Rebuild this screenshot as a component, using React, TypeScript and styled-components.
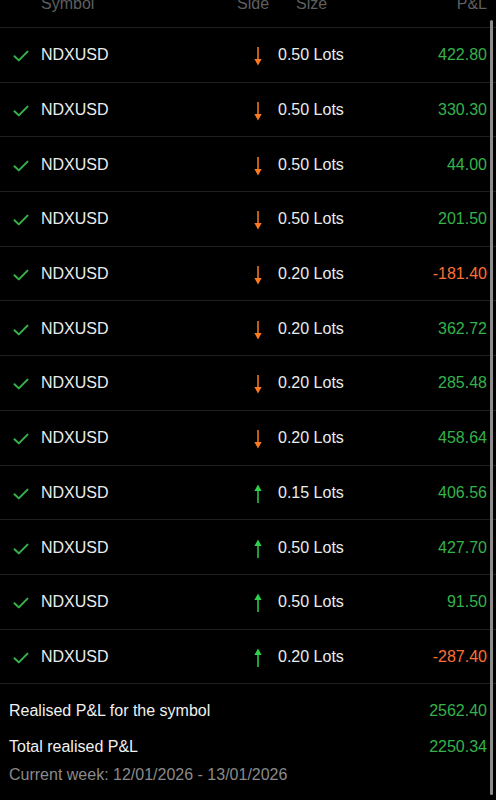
import React from 'react';
import styled, { createGlobalStyle } from 'styled-components';

type Trade = { side: 'buy' | 'sell'; lots: string; pnl: number };

const trades: Trade[] = [
  { side: 'sell', lots: '0.50', pnl: 422.8 },
  { side: 'sell', lots: '0.50', pnl: 330.3 },
  { side: 'sell', lots: '0.50', pnl: 44.0 },
  { side: 'sell', lots: '0.50', pnl: 201.5 },
  { side: 'sell', lots: '0.20', pnl: -181.4 },
  { side: 'sell', lots: '0.20', pnl: 362.72 },
  { side: 'sell', lots: '0.20', pnl: 285.48 },
  { side: 'sell', lots: '0.20', pnl: 458.64 },
  { side: 'buy', lots: '0.15', pnl: 406.56 },
  { side: 'buy', lots: '0.50', pnl: 427.7 },
  { side: 'buy', lots: '0.50', pnl: 91.5 },
  { side: 'buy', lots: '0.20', pnl: -287.4 },
];

const GREEN = '#35b24a';
const ORANGE = '#ff6f35';

const CheckIcon = () => (
  <svg width="16" height="12" viewBox="0 0 16 12">
    <path d="M1.5 6.2 L5.8 10.4 L14.5 1.6" fill="none" stroke={GREEN} strokeWidth="2" strokeLinecap="round" strokeLinejoin="round" />
  </svg>
);

const SideArrow: React.FC<{ side: 'buy' | 'sell' }> = ({ side }) => {
  const color = side === 'buy' ? '#2fd14a' : '#ff7a1f';
  return (
    <svg width="10" height="20" viewBox="0 0 10 20" style={{ transform: side === 'buy' ? 'rotate(180deg)' : undefined }}>
      <line x1="5" y1="1" x2="5" y2="14" stroke={color} strokeWidth="1.5" />
      <path d="M1.4 13 L8.6 13 L5 19.5 Z" fill={color} />
    </svg>
  );
};

const App: React.FC = () => {
  return (
    <>
      <GlobalStyle />
      <Screen>
        <Header>
          <HeadCell>Symbol</HeadCell>
          <HeadCell>Side</HeadCell>
          <HeadCell>Size</HeadCell>
          <HeadCell $right>P&amp;L</HeadCell>
        </Header>
        {trades.map((t, i) => (
          <Row key={i}>
            <CheckCell>
              <CheckIcon />
            </CheckCell>
            <Symbol>NDXUSD</Symbol>
            <ArrowCell>
              <SideArrow side={t.side} />
            </ArrowCell>
            <Size>{t.lots} Lots</Size>
            <Pnl $negative={t.pnl < 0}>{t.pnl.toFixed(2)}</Pnl>
          </Row>
        ))}
        <Summary>
          <SummaryLine>
            <SummaryLabel>Realised P&amp;L for the symbol</SummaryLabel>
            <SummaryValue>2562.40</SummaryValue>
          </SummaryLine>
          <SummaryLine>
            <SummaryLabel>Total realised P&amp;L</SummaryLabel>
            <SummaryValue>2250.34</SummaryValue>
          </SummaryLine>
          <WeekNote>Current week: 12/01/2026 - 13/01/2026</WeekNote>
        </Summary>
        <ScrollBar />
      </Screen>
    </>
  );
};

const GlobalStyle = createGlobalStyle`
  html, body {
    margin: 0;
    padding: 0;
    background: #000;
  }
  body {
    font-family: "Liberation Sans", Arial, sans-serif;
    color: #ececec;
    overflow: hidden;
  }
`;

const Screen = styled.div`
  position: relative;
  width: 496px;
  height: 800px;
  overflow: hidden;
  background: #000;
`;

const Header = styled.div`
  display: grid;
  grid-template-columns: 196px 59px 1fr 1fr;
  align-items: center;
  height: 46px;
  margin-top: -19px;
  padding-left: 41px;
  padding-right: 9px;
  border-bottom: 1px solid #1f1f1f;
  font-size: 16px;
  color: #5f5f5f;
`;

const HeadCell = styled.span<{ $right?: boolean }>`
  text-align: ${p => (p.$right ? 'right' : 'left')};
`;

const Row = styled.div`
  display: flex;
  align-items: center;
  box-sizing: border-box;
  height: 54.7px;
  padding-top: 1px;
  padding-right: 9px;
  border-bottom: 1px solid #1f1f1f;
  font-size: 16px;
`;

const CheckCell = styled.div`
  width: 41px;
  display: flex;
  justify-content: center;
  padding-left: 1px;
  box-sizing: border-box;
  padding-top: 2px;
`;

const Symbol = styled.span`
  width: 212px;
`;

const ArrowCell = styled.div`
  width: 25px;
  display: flex;
  align-items: center;
  padding-top: 2px;
`;

const Size = styled.span`
  flex: 1;
`;

const Pnl = styled.span<{ $negative: boolean }>`
  color: ${p => (p.$negative ? ORANGE : GREEN)};
`;

const Summary = styled.div`
  display: flex;
  flex-direction: column;
  padding: 9px 9px 0 9px;
  font-size: 16px;
`;

const SummaryLine = styled.div`
  display: flex;
  justify-content: space-between;
  align-items: center;
  height: 36px;
`;

const SummaryLabel = styled.span`
  color: #f0f0f0;
`;

const SummaryValue = styled.span`
  color: ${GREEN};
`;

const WeekNote = styled.div`
  color: #8a8a8a;
  margin-top: 1px;
`;

const ScrollBar = styled.div`
  position: absolute;
  right: 3px;
  top: 20px;
  width: 3px;
  height: 775px;
  border-radius: 2px;
  background: #8c8c8c;
`;

export default App;
